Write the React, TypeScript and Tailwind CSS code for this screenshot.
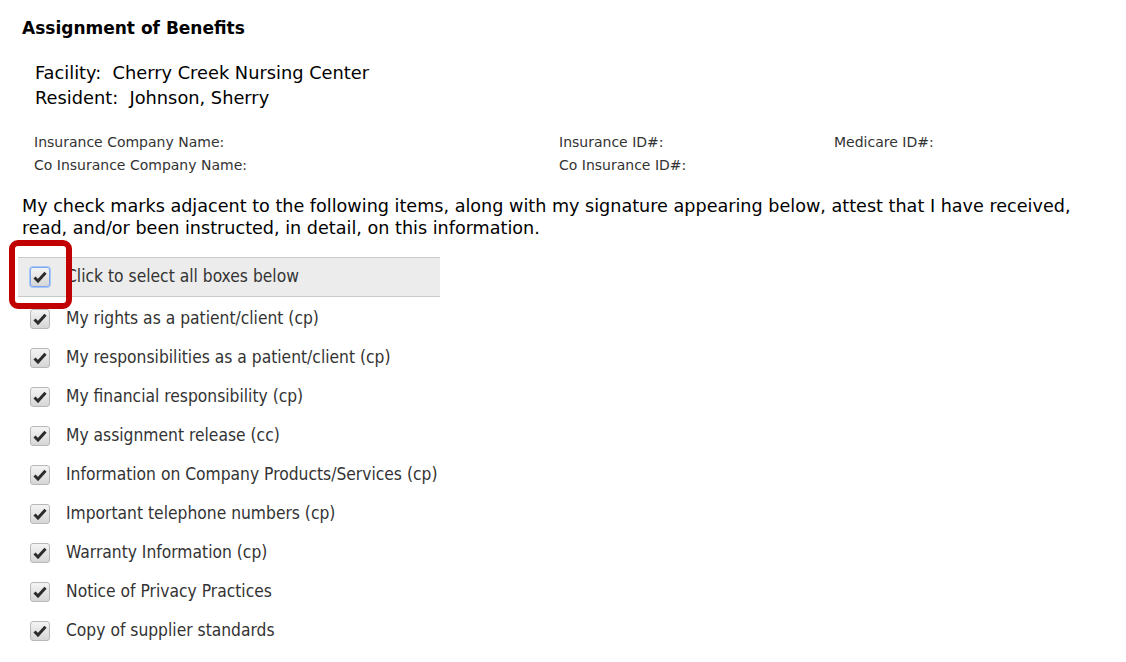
import React from "react";

const items = [
  "My rights as a patient/client (cp)",
  "My responsibilities as a patient/client (cp)",
  "My financial responsibility (cp)",
  "My assignment release (cc)",
  "Information on Company Products/Services (cp)",
  "Important telephone numbers (cp)",
  "Warranty Information (cp)",
  "Notice of Privacy Practices",
  "Copy of supplier standards",
];

function Check({ focus = false }: { focus?: boolean }) {
  return (
    <span
      className={`flex h-[20px] w-[20px] shrink-0 items-center justify-center rounded-[3px] border bg-gradient-to-b from-[#f4f4f4] to-[#d6d6d6] ${
        focus ? "border-[#7aa7f0] shadow-[0_0_0_1px_#a9c6f7]" : "border-[#b8b8b8]"
      }`}
    >
      <svg width="14" height="12" viewBox="0 0 14 12">
        <path d="M1.5 6.5 L5 10 L12.5 1.8" fill="none" stroke="#2b2b2b" strokeWidth="3" strokeLinejoin="miter" />
      </svg>
    </span>
  );
}

export default function App() {
  return (
    <main className="min-h-screen bg-white px-[22px] pt-[18px] text-black [font-family:'DejaVu_Sans',Verdana,sans-serif]">
      <h1 className="text-[17px] font-bold leading-[20px]">Assignment of Benefits</h1>

      <div className="mt-[22px] pl-[13px] text-[17.8px] leading-[25px]">
        <div>Facility:&nbsp; Cherry Creek Nursing Center</div>
        <div>Resident:&nbsp; Johnson, Sherry</div>
      </div>

      <div className="mt-[21px] grid grid-cols-[525px_275px_1fr] pl-[12px] text-[14px] leading-[23px] text-[#333]">
        <div>Insurance Company Name:</div>
        <div>Insurance ID#:</div>
        <div>Medicare ID#:</div>
        <div>Co Insurance Company Name:</div>
        <div>Co Insurance ID#:</div>
        <div></div>
      </div>

      <p className="mt-[18px] text-[17.6px] leading-[22px]">
        My check marks adjacent to the following items, along with my signature appearing below, attest that I have received,
        read, and/or been instructed, in detail, on this information.
      </p>

      <div className="relative mt-[18px] -ml-[4px] w-[422px] text-[17.3px] text-[#333] [font-family:'DejaVu_Sans_Condensed','Liberation_Sans',sans-serif]">
        <div className="flex h-[40px] items-center gap-[16px] border-y border-[#cacaca] bg-[#ececec] pl-[12px]">
          <Check focus />
          <span>Click to select all boxes below</span>
        </div>
        <div className="pointer-events-none absolute left-[-9px] top-[-17px] h-[69px] w-[63px] rounded-[9px] border-[6px] border-[#c10000]" />
        <div className="pt-[2px]">
          {items.map((t) => (
            <div key={t} className="flex h-[39px] items-center gap-[16px] pl-[12px]">
              <Check />
              <span>{t}</span>
            </div>
          ))}
        </div>
      </div>
    </main>
  );
}
